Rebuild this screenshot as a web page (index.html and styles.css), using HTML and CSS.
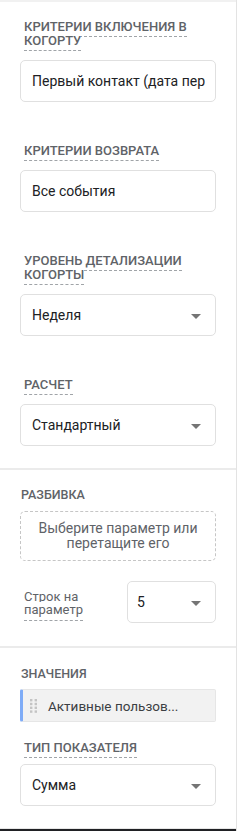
FILE: index.html
```html
<!DOCTYPE html>
<html lang="ru">
<head>
<meta charset="utf-8">
<title>Панель</title>
<link rel="stylesheet" href="styles.css">
</head>
<body>
<div class="panel">
  <div class="topstrip"></div>
  <div class="group">
    <div class="field">
      <div class="label"><span class="ul">Критерии включения в когорту</span></div>
      <div class="box"><span class="val">Первый контакт (дата первого посещения)</span></div>
    </div>
    <div class="field">
      <div class="label"><span class="ul">Критерии возврата</span></div>
      <div class="box"><span class="val">Все события</span></div>
    </div>
    <div class="field">
      <div class="label"><span class="ul">Уровень детализации когорты</span></div>
      <div class="box select"><span class="val">Неделя</span><span class="arrow"></span></div>
    </div>
    <div class="field">
      <div class="label"><span class="ul">Расчет</span></div>
      <div class="box select"><span class="val">Стандартный</span><span class="arrow"></span></div>
    </div>
  </div>
  <div class="sep"></div>
  <div class="group g2">
    <div class="heading">Разбивка</div>
    <div class="dropzone">Выберите параметр или<br>перетащите его</div>
    <div class="rows">
      <div class="rows-label"><span class="ul2">Строк на параметр</span></div>
      <div class="box select small"><span class="val">5</span><span class="arrow"></span></div>
    </div>
  </div>
  <div class="sep"></div>
  <div class="group g3">
    <div class="heading">Значения</div>
    <div class="chip">
      <svg class="grip" width="8" height="14" viewBox="0 0 8 14"><g fill="#c4c4c4"><rect x="0" y="0" width="2.4" height="2.4"/><rect x="4.6" y="0" width="2.4" height="2.4"/><rect x="0" y="3.8" width="2.4" height="2.4"/><rect x="4.6" y="3.8" width="2.4" height="2.4"/><rect x="0" y="7.6" width="2.4" height="2.4"/><rect x="4.6" y="7.6" width="2.4" height="2.4"/><rect x="0" y="11.4" width="2.4" height="2.4"/><rect x="4.6" y="11.4" width="2.4" height="2.4"/></g></svg>
      <span class="chip-text">Активные пользов...</span>
    </div>
    <div class="field f-last">
      <div class="label"><span class="ul">Тип показателя</span></div>
      <div class="box select"><span class="val">Сумма</span><span class="arrow"></span></div>
    </div>
  </div>
  <div class="spacer"></div>
  <div class="bottomline"></div>
  <div class="bottombar"></div>
</div>
</body>
</html>
```
FILE: styles.css
```css
html, body {
  margin: 0;
  padding: 0;
  background: #ffffff;
}
body {
  font-family: Roboto, "Noto Sans", "Liberation Sans", sans-serif;
  color: #202124;
}
.panel {
  width: 236px;
  height: 831px;
  border-right: 1px solid #e3e3e3;
  display: flex;
  flex-direction: column;
  overflow: hidden;
}
.topstrip {
  height: 2px;
  background: #f1f1f1;
  flex: none;
}
.group {
  padding: 18px 20px 0 20px;
  display: flex;
  flex-direction: column;
}
.field {
  display: flex;
  flex-direction: column;
  margin-bottom: 42px;
}
.field:last-child {
  margin-bottom: 22px;
}
.label {
  padding-left: 4px;
  padding-right: 8px;
  font-size: 13px;
  line-height: 14px;
  font-weight: 500;
  text-transform: uppercase;
  color: #5f6368;
  margin-bottom: 12px;
}
.ul {
  border-bottom: 1px dashed #a0a4a8;
  padding-bottom: 2px;
  background: #ffffff;
}
.box {
  height: 42px;
  box-sizing: border-box;
  border: 1px solid #e0e0e0;
  border-radius: 5px;
  display: flex;
  align-items: center;
  padding: 0 10px 0 11px;
  overflow: hidden;
  font-size: 14px;
}
.val {
  white-space: nowrap;
  overflow: hidden;
  text-overflow: clip;
  flex: 1;
  color: #202124;
}
.arrow {
  flex: none;
  width: 0;
  height: 0;
  border-left: 5px solid transparent;
  border-right: 5px solid transparent;
  border-top: 5px solid #757575;
  margin-right: 4px;
  margin-top: 2px;
}
.sep {
  height: 2px;
  background: #ebebeb;
  flex: none;
}
.g2 {
  padding-top: 18px;
}
.heading {
  font-size: 12.5px;
  line-height: 14px;
  font-weight: 500;
  text-transform: uppercase;
  color: #5f6368;
  padding-left: 1px;
}
.dropzone {
  margin-top: 9px;
  height: 50px;
  box-sizing: border-box;
  border: 1px dashed #c6c6c6;
  border-radius: 5px;
  display: flex;
  align-items: center;
  justify-content: center;
  text-align: center;
  font-size: 14px;
  line-height: 15px;
  color: #5f6368;
}
.rows {
  margin-top: 20px;
  display: flex;
  align-items: center;
  margin-bottom: 23px;
}
.rows-label {
  width: 107px;
  padding-left: 4px;
  box-sizing: border-box;
  font-size: 13px;
  line-height: 13px;
  color: #5f6368;
  padding-top: 2px;
}
.ul2 {
  border-bottom: 1px dashed #a0a4a8;
  padding-bottom: 3px;
  background: #ffffff;
}
.small {
  width: 89px;
  padding-left: 9px;
}
.g3 {
  padding-top: 19px;
}
.chip {
  margin-top: 8px;
  height: 33px;
  box-sizing: border-box;
  background: #f2f2f2;
  border: 1px solid #e6e6e6;
  border-left: 3px solid #7facf7;
  border-radius: 2px;
  display: flex;
  align-items: center;
  padding-left: 7px;
  margin-bottom: 19px;
}
.grip {
  flex: none;
  margin-right: 10px;
}
.chip-text {
  font-size: 13.5px;
  color: #3c4043;
  white-space: nowrap;
}
.f-last .label {
  margin-bottom: 9px;
}
.spacer {
  flex: 1;
}
.bottomline {
  height: 1px;
  background: #e6e6e6;
  flex: none;
}
.bottombar {
  height: 2px;
  background: #202124;
  flex: none;
}
```
